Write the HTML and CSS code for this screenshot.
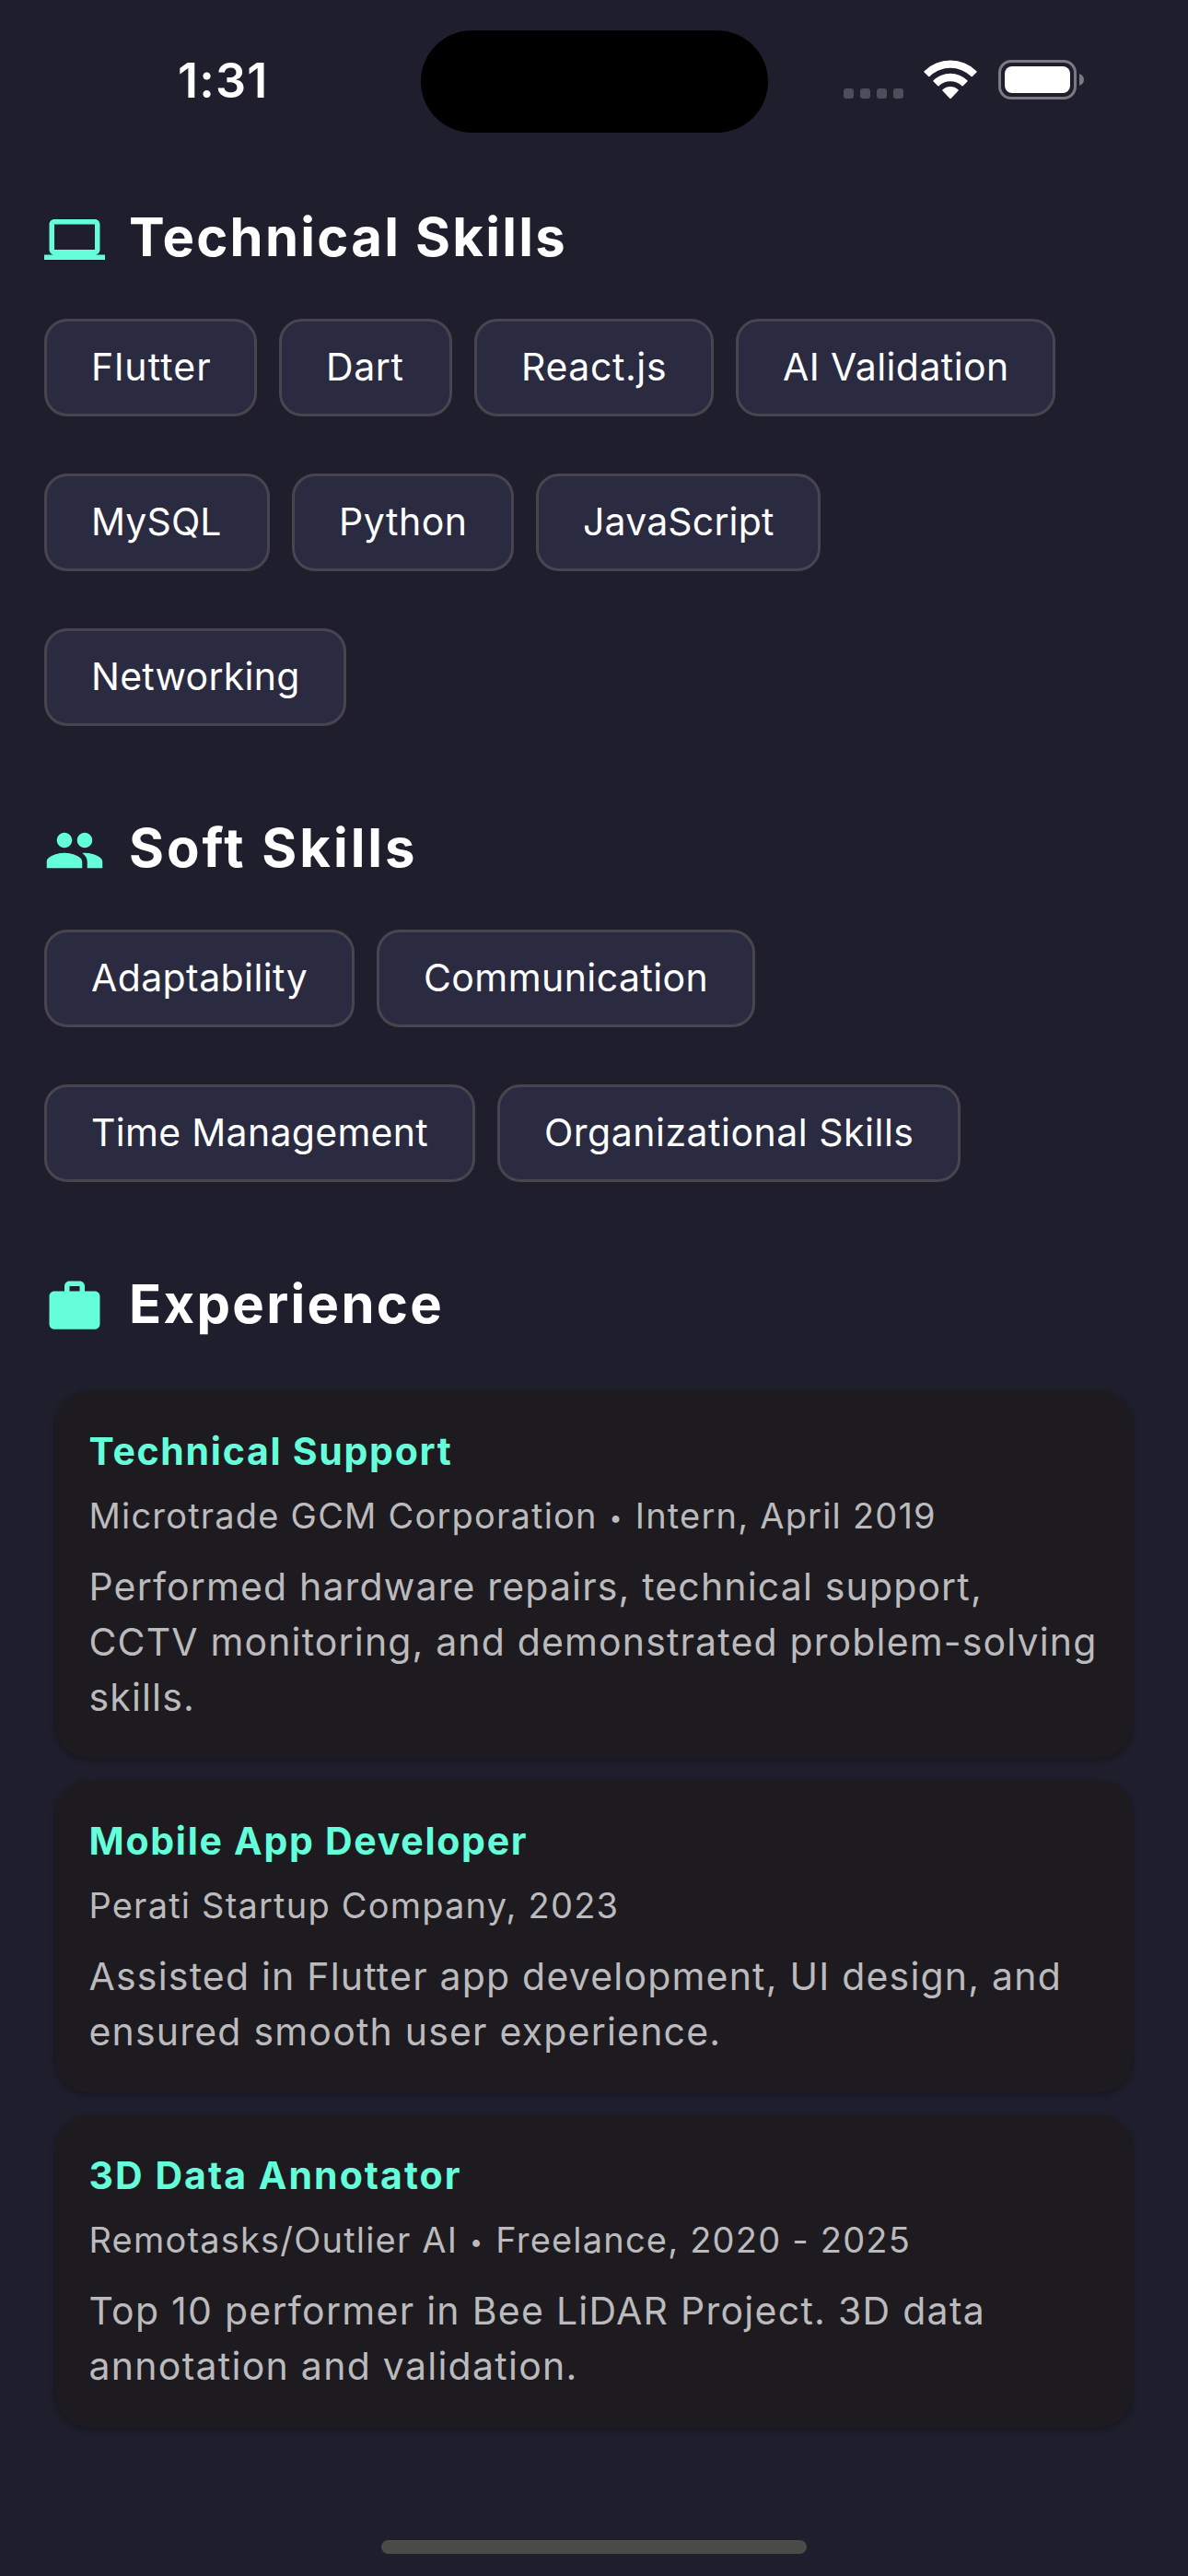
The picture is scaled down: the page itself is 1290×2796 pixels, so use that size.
FILE: index.html
```html
<!DOCTYPE html>
<html lang="en">
<head>
  <meta charset="utf-8">
  <title>Portfolio</title>
  <link rel="stylesheet" href="styles.css">
</head>
<body>
  <header class="status">
    <div class="status-time">1:31</div>
    <div class="island"></div>
    <div class="status-icons">
      <svg class="cell" width="66" height="11" viewBox="0 0 66 11">
        <rect width="11" height="11" rx="3"/><rect x="18" width="11" height="11" rx="3"/><rect x="36" width="11" height="11" rx="3"/><rect x="54" width="11" height="11" rx="3"/>
      </svg>
      <svg class="wifi" width="58" height="43" viewBox="0 0 58 43">
        <path d="M0.6 12.2Q0 12.9 .6 13.5L5.2 18Q5.8 18.6 6.4 18A32.500 32.500 0 0 1 51.600 18Q52.200 18.600 52.800 18L57.400 13.500Q58 12.900 57.400 12.200A40.600 40.600 0 0 0 .6 12.200Z"/>
        <path d="M10.600 22.300Q10 23 10.600 23.600L15.300 28.200Q15.900 28.800 16.500 28.200A18.200 18.200 0 0 1 41.500 28.200Q42.100 28.800 42.700 28.200L47.400 23.600Q48 23 47.400 22.300A26.300 26.300 0 0 0 10.600 22.300Z"/>
        <path d="M20.500 32.300Q19.900 33 20.500 33.600L28.200 41.700Q29 42.500 29.800 41.700L37.500 33.600Q38.100 33 37.500 32.300A12.400 12.400 0 0 0 20.500 32.300Z"/>
      </svg>
      <svg class="battery" width="94" height="43" viewBox="0 0 94 43">
        <rect class="battery-shell" x="1.500" y="1.500" width="82" height="40" rx="12.500"/>
        <path class="battery-cap" d="M88 15Q93 17 93 21.500T88 28Z"/>
        <rect class="battery-fill" x="7" y="7" width="71" height="29" rx="8"/>
      </svg>
    </div>
  </header>

  <main class="content">
    <section class="section">
      <h2 class="heading heading--technical">
        <svg class="heading-icon" viewBox="0 0 24 24"><path d="M20 18c1.100 0 1.990-.9 1.990-2L22 6c0-1.100-.9-2-2-2H4c-1.100 0-2 .9-2 2v10c0 1.100.9 2 2 2H0v2h24v-2h-4zM4 6h16v10H4V6z"/></svg>
        <span class="heading-text">Technical Skills</span>
      </h2>
      <div class="chips">
        <div class="chip chip--flutter">Flutter</div>
        <div class="chip chip--dart">Dart</div>
        <div class="chip chip--react">React.js</div>
        <div class="chip chip--ai">AI Validation</div>
        <div class="chip chip--mysql">MySQL</div>
        <div class="chip chip--python">Python</div>
        <div class="chip chip--javascript">JavaScript</div>
        <div class="chip chip--networking">Networking</div>
      </div>
    </section>

    <section class="section">
      <h2 class="heading heading--soft">
        <svg class="heading-icon" viewBox="0 0 24 24"><path d="M16 11c1.660 0 2.990-1.340 2.990-3S17.660 5 16 5c-1.660 0-3 1.340-3 3s1.340 3 3 3zm-8 0c1.660 0 2.990-1.340 2.990-3S9.660 5 8 5C6.340 5 5 6.340 5 8s1.340 3 3 3zm0 2c-2.330 0-7 1.170-7 3.500V19h14v-2.500c0-2.330-4.670-3.500-7-3.500zm8 0c-.29 0-.62.02-.97.05 1.160.84 1.970 1.970 1.970 3.450V19h6v-2.500c0-2.330-4.670-3.500-7-3.500z"/></svg>
        <span class="heading-text">Soft Skills</span>
      </h2>
      <div class="chips">
        <div class="chip chip--adaptability">Adaptability</div>
        <div class="chip chip--communication">Communication</div>
        <div class="chip chip--time">Time Management</div>
        <div class="chip chip--organizational">Organizational Skills</div>
      </div>
    </section>

    <section class="section">
      <h2 class="heading heading--experience">
        <svg class="heading-icon" viewBox="0 0 24 24"><path d="M20 6h-4V4c0-1.110-.89-2-2-2h-4c-1.110 0-2 .89-2 2v2H4c-1.110 0-1.990.89-1.990 2L2 19c0 1.110.89 2 2 2h16c1.110 0 2-.89 2-2V8c0-1.110-.89-2-2-2zm-6 0h-4V4h4v2z"/></svg>
        <span class="heading-text">Experience</span>
      </h2>
      <div class="cards">
        <article class="card">
          <h3 class="card-title">Technical Support</h3>
          <p class="card-meta">Microtrade GCM Corporation <span class="dot">•</span> Intern, April 2019</p>
          <p class="card-text">Performed hardware repairs, technical support,<br>CCTV monitoring, and demonstrated problem-solving<br>skills.</p>
        </article>
        <article class="card card--developer">
          <h3 class="card-title">Mobile App Developer</h3>
          <p class="card-meta">Perati Startup Company, 2023</p>
          <p class="card-text">Assisted in Flutter app development, UI design, and<br>ensured smooth user experience.</p>
        </article>
        <article class="card card--annotator">
          <h3 class="card-title">3D Data Annotator</h3>
          <p class="card-meta">Remotasks/Outlier AI <span class="dot">•</span> Freelance, 2020 - 2025</p>
          <p class="card-text">Top 10 performer in Bee LiDAR Project. 3D data<br>annotation and validation.</p>
        </article>
      </div>
    </section>
  </main>

  <footer class="home"><div class="home-bar"></div></footer>
</body>
</html>
```
FILE: styles.css
```css
* { box-sizing: border-box; }

body {
  margin: 0;
  width: 1290px;
  height: 2796px;
  display: flex;
  flex-direction: column;
  background: #1e1e2c;
  color: #fff;
  font-family: Inter, "Liberation Sans", sans-serif;
  overflow: hidden;
}

h2, h3, p { margin: 0; }
svg { display: block; flex: none; }

/* Status bar */
.status {
  height: 177px;
  display: grid;
  grid-template-columns: 457px 377px 456px;
  align-items: start;
}
.status-time {
  padding: 57px 0 0 193px;
  font-size: 52px;
  line-height: 62px;
  font-weight: 600;
  letter-spacing: 1.2px;
  white-space: nowrap;
}
.island {
  height: 111px;
  margin-top: 33px;
  border-radius: 56px;
  background: #000;
}
.status-icons {
  display: flex;
  align-items: flex-end;
  padding: 65px 0 0 82px;
}
.cell { fill: #4e4d59; margin-bottom: 1px; }
.wifi { fill: #fff; margin-left: 21px; }
.battery { margin-left: 23px; }
.battery-shell { fill: none; stroke: #7b7a83; stroke-width: 3; }
.battery-cap { fill: #7b7a83; }
.battery-fill { fill: #fff; }

/* Page content */
.content {
  flex: 1;
  display: flex;
  flex-direction: column;
  gap: 102px;
  padding: 50px 48px 0;
}
.heading {
  display: flex;
  align-items: flex-start;
  gap: 26px;
  height: 66px;
  font-size: 58px;
  font-weight: 700;
  line-height: 61px;
  white-space: nowrap;
}
.heading--technical { letter-spacing: 2.25px; }
.heading--soft { letter-spacing: 3px; }
.heading--experience { letter-spacing: 2.3px; }
.heading-icon { width: 66px; height: 66px; fill: #64ffda; }

/* Skill chips */
.chips {
  display: flex;
  flex-wrap: wrap;
  gap: 62px 24px;
  margin-top: 53px;
}
.chip {
  height: 106px;
  padding-left: 48px;
  border: 3px solid #49454f;
  border-radius: 25px;
  background: #2a2a40;
  font-size: 41px;
  line-height: 99px;
  white-space: nowrap;
}
.chip--flutter { width: 231px; letter-spacing: 1.1px; }
.chip--dart { width: 188px; letter-spacing: 0.6px; }
.chip--react { width: 260px; letter-spacing: 0.6px; }
.chip--ai { width: 347px; letter-spacing: 0.42px; }
.chip--mysql { width: 245px; letter-spacing: 0.1px; }
.chip--python { width: 241px; letter-spacing: 0.55px; }
.chip--javascript { width: 309px; letter-spacing: 0.16px; }
.chip--networking { width: 328px; letter-spacing: 0.25px; }
.chip--adaptability { width: 337px; letter-spacing: 0.4px; }
.chip--communication { width: 411px; letter-spacing: 0.42px; }
.chip--time { width: 468px; letter-spacing: 0.3px; }
.chip--organizational { width: 503px; letter-spacing: 0.5px; }

/* Experience cards */
.cards {
  display: flex;
  flex-direction: column;
  gap: 24px;
  margin: 58px 12px 0;
}
.card {
  padding: 41px 0 36px 36.5px;
  border-radius: 37px;
  background: #1d1b20;
  box-shadow: 0 3px 6px rgba(0, 0, 0, 0.25);
  white-space: nowrap;
}
.card-title {
  color: #64ffda;
  font-size: 41px;
  font-weight: 700;
  line-height: 50px;
  letter-spacing: 1.72px;
}
.card-meta {
  margin-top: 22px;
  color: #bbbabc;
  font-size: 38px;
  line-height: 46px;
  letter-spacing: 1.2px;
}
.card-text {
  margin-top: 24px;
  color: #bbbabc;
  font-size: 41px;
  line-height: 60px;
  letter-spacing: 1.15px;
}
.dot {
  display: inline-block;
  font-size: 25px;
  line-height: 1;
  vertical-align: 3px;
  margin: 0 1px;
}
.card--developer .card-text { letter-spacing: 1.2px; }
.card--annotator .card-title { letter-spacing: 2.05px; }
.card--annotator .card-text { letter-spacing: 1.27px; }

/* Home indicator */
.home {
  display: flex;
  justify-content: center;
  padding-bottom: 24px;
}
.home-bar {
  width: 462px;
  height: 15px;
  border-radius: 8px;
  background: #4b4b4a;
}
```
